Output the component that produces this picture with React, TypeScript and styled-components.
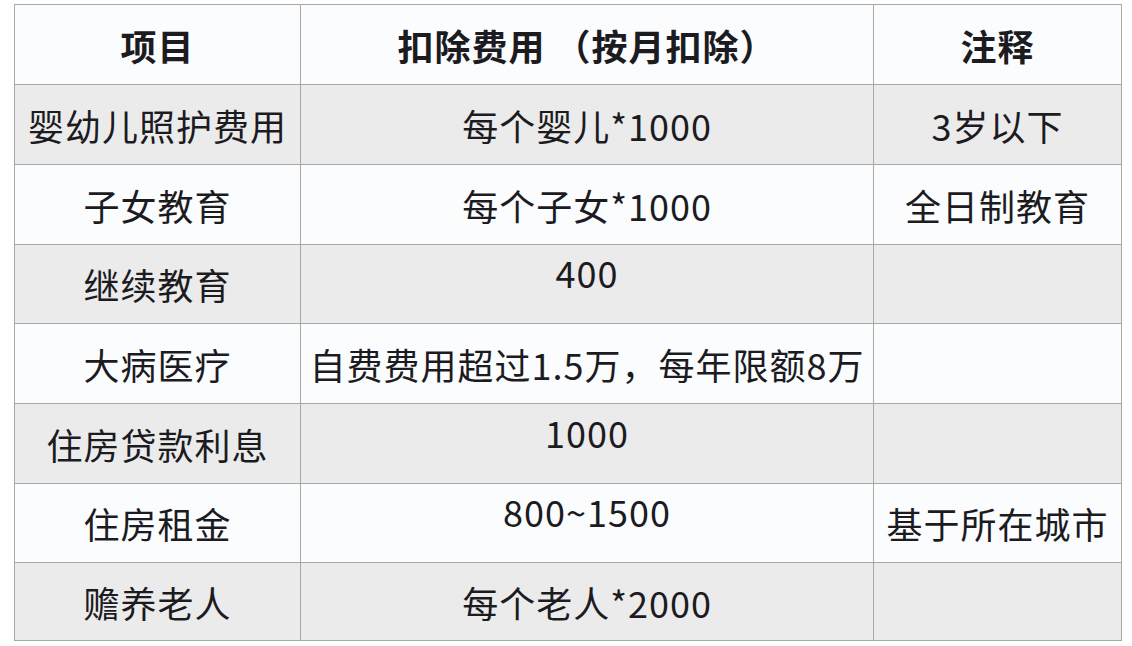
import React from 'react';
import styled, { createGlobalStyle } from 'styled-components';

const GlobalStyle = createGlobalStyle`
  html, body {
    margin: 0;
    padding: 0;
    background: #fefefe;
  }
  body {
    font-family: 'Noto Sans CJK SC', 'Noto Sans', sans-serif;
    color: #1c1b1f;
  }
`;

const Page = styled.div`
  padding: 4px 11px 0 14px;
`;

const Table = styled.table`
  width: 1107px;
  border-collapse: collapse;
  table-layout: fixed;
  border: 1px solid #a8a8a8;
`;

const Row = styled.tr<{ $shade?: boolean; $h: number }>`
  height: ${p => p.$h}px;
  background: ${p => (p.$shade ? '#ebebeb' : '#fbfcfe')};
`;

const HeadCell = styled.th`
  border: 1px solid #a8a8a8;
  padding: 0;
  font-size: 36px;
  font-weight: 700;
  letter-spacing: 1px;
  text-align: center;
  vertical-align: middle;
  white-space: nowrap;
`;

const Cell = styled.td<{ $raised?: boolean }>`
  border: 1px solid #a8a8a8;
  padding: 0 0 ${p => (p.$raised ? '24px' : '0')} 0;
  font-size: 36px;
  font-weight: 400;
  letter-spacing: 1px;
  text-align: center;
  vertical-align: middle;
  white-space: nowrap;
`;

interface Item {
  name: string;
  amount: string;
  note: string;
  raised?: boolean;
  h: number;
}

const items: Item[] = [
  { name: '婴幼儿照护费用', amount: '每个婴儿*1000', note: '3岁以下', h: 80 },
  { name: '子女教育', amount: '每个子女*1000', note: '全日制教育', h: 80 },
  { name: '继续教育', amount: '400', note: '', raised: true, h: 79 },
  { name: '大病医疗', amount: '自费费用超过1.5万，每年限额8万', note: '', h: 80 },
  { name: '住房贷款利息', amount: '1000', note: '', raised: true, h: 80 },
  { name: '住房租金', amount: '800~1500', note: '基于所在城市', raised: true, h: 79 },
  { name: '赡养老人', amount: '每个老人*2000', note: '', h: 78 },
];

const App: React.FC = () => {
  return (
    <Page>
      <GlobalStyle />
      <Table>
        <colgroup>
          <col style={{ width: 286 }} />
          <col style={{ width: 573 }} />
          <col style={{ width: 248 }} />
        </colgroup>
        <thead>
          <Row $h={80}>
            <HeadCell>项目</HeadCell>
            <HeadCell>扣除费用 （按月扣除）</HeadCell>
            <HeadCell>注释</HeadCell>
          </Row>
        </thead>
        <tbody>
          {items.map((it, i) => (
            <Row key={it.name} $shade={i % 2 === 0} $h={it.h}>
              <Cell>{it.name}</Cell>
              <Cell $raised={it.raised}>{it.amount}</Cell>
              <Cell>{it.note}</Cell>
            </Row>
          ))}
        </tbody>
      </Table>
    </Page>
  );
};

export default App;
